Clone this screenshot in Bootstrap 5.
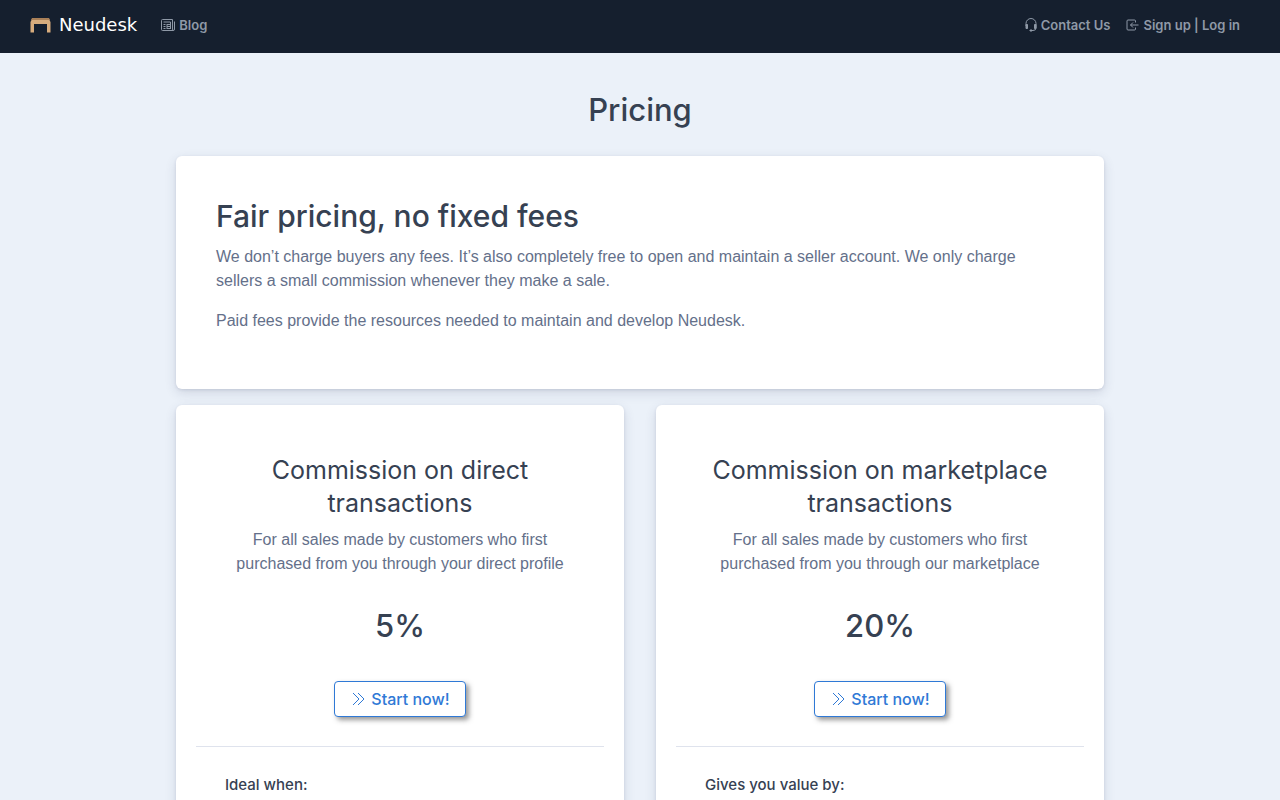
<!DOCTYPE html>
<html lang="en">
<head>
<meta charset="utf-8">
<meta name="viewport" content="width=device-width, initial-scale=1">
<title>Pricing - Neudesk</title>
<link href="https://cdn.jsdelivr.net/npm/bootstrap@5.3.0/dist/css/bootstrap.min.css" rel="stylesheet">
<style>
  body { background: #ebf1f9; color: #64708a; font: 400 16px/24px "Liberation Sans", Arial, sans-serif; }
  .site-nav { background: #151f2e; height: 53px; padding: 0 40px 4px 30px; font-family: "DejaVu Sans", sans-serif; }
  .site-nav .navbar-brand { color: #fff; font-size: 18px; line-height: 24px; gap: 8px; padding: 0; margin-right: 24px; }
  .site-nav .nav-link { color: #8f99a7; font-family: Inter, sans-serif; font-size: 13px; font-weight: 600; line-height: 24px; gap: 4px; padding: 0; }
  .nav-end { gap: 16px; }
  .page { max-width: 960px; padding: 36px 16px 40px; }
  h1, h2, h3, h4, .rate { font-family: Inter, sans-serif; color: #364152; }
  h1, .rate { font-size: 31px; line-height: 41px; font-weight: 500; }
  h1 { margin-bottom: 26px; }
  h2 { font-size: 30px; line-height: 41px; font-weight: 500; }
  h3 { font-size: 25px; line-height: 33px; font-weight: 400; margin-bottom: 8px; }
  h4 { font-size: 15px; line-height: 24px; font-weight: 500; }
  .panel { background: #fff; border-radius: 6px; box-shadow: 0 4px 12px rgba(50, 55, 95, .14), 0 1px 3px rgba(50, 55, 95, .12); }
  .intro { padding: 40px; }
  .plans { --bs-gutter-x: 32px; }
  .plan-top { padding: 49px 44px 29px; }
  .rate { margin: 29px 0 35px; }
  .btn-start { --bs-btn-color: #2f79d6; --bs-btn-border-color: #2f79d6; --bs-btn-bg: #fff; --bs-btn-hover-color: #fff; --bs-btn-hover-bg: #2f79d6;
    font-family: Inter, sans-serif; font-size: 16px; line-height: 24px; font-weight: 500; border-radius: 4px; padding: 5px 15px; gap: 5px; box-shadow: 3px 3px 5px rgba(50, 50, 50, .5); }
  .plan-list { margin: 0 20px; padding: 26px 29px 40px; border-top: 1px solid #dfe3ed; }
</style>
</head>
<body>
<nav class="site-nav navbar navbar-expand" aria-label="Main">
  <a class="navbar-brand d-flex align-items-center" href="#">
    <svg width="21" height="16" viewBox="0 0 21 16" aria-hidden="true"><path fill="#d7ac7d" d="M2 2h17l1.500 3v10.500h-3.500V7H4v8.500H.5V5z"/><path fill="#a98058" d="M2 1h17l1 2H1z"/></svg>
    <span>Neudesk</span>
  </a>
  <a class="nav-link d-flex align-items-center" href="#">
    <svg width="14" height="14" viewBox="0 0 14 14" fill="none" stroke="currentColor" aria-hidden="true"><path d="M11.500 1.500v9.500q0 1.500 1 1.500t1-1.500V3.500M11.500 1.500h-10q-1 0-1 1v9q0 1 1 1h11M2.500 4h7M2.500 6.500h2M2.500 8.500h2M2.500 10.500h2M6 6.500h3.500M6 8.500h3.500M6 10.500h3.500M6 6v5M9.500 4v7"/></svg>
    <span>Blog</span>
  </a>
  <div class="nav-end d-flex ms-auto">
    <a class="nav-link d-flex align-items-center" href="#">
      <svg width="12" height="14" viewBox="0 0 12 14" fill="none" stroke="currentColor" aria-hidden="true"><path d="M1 8V5.500a5 5 0 0 1 10 0V10q0 2.500-3 2.500H6"/><path fill="currentColor" d="M1 6.500h1.500v4H1zM9.500 6.500H11v4H9.500zM5 12h2v1H5z"/></svg>
      <span>Contact Us</span>
    </a>
    <a class="nav-link d-flex align-items-center" href="#">
      <svg width="13" height="12" viewBox="0 0 13 12" fill="none" stroke="currentColor" aria-hidden="true"><path d="M9.500 3.500V2q0-1-1-1H2Q1 1 1 2v8q0 1 1 1h6.500q1 0 1-1V8.500M12.500 6H4.500M7 3.500L4.500 6 7 8.500"/></svg>
      <span>Sign up | Log in</span>
    </a>
  </div>
</nav>
<main class="page container-fluid">
  <h1 class="text-center">Pricing</h1>
  <section class="panel intro mb-3">
    <h2 class="mb-2">Fair pricing, no fixed fees</h2>
    <p>We don’t charge buyers any fees. It’s also completely free to open and maintain a seller account. We only charge sellers a small commission whenever they make a sale.</p>
    <p>Paid fees provide the resources needed to maintain and develop Neudesk.</p>
  </section>
  <div class="plans row row-cols-1 row-cols-md-2 gy-3 gy-md-0">
    <div class="col">
      <section class="panel h-100">
        <div class="plan-top text-center">
          <h3>Commission on direct transactions</h3>
          <p class="mb-0">For all sales made by customers who first purchased from you through your direct profile</p>
          <div class="rate">5%</div>
          <button type="button" class="btn btn-start d-inline-flex align-items-center">
            <svg width="16" height="16" viewBox="0 0 16 16" fill="none" stroke="currentColor" aria-hidden="true"><path d="M3 2l6 6-6 6M8 2l6 6-6 6"/></svg>Start now!
          </button>
        </div>
        <div class="plan-list"><h4 class="mb-0">Ideal when:</h4></div>
      </section>
    </div>
    <div class="col">
      <section class="panel h-100">
        <div class="plan-top text-center">
          <h3>Commission on marketplace transactions</h3>
          <p class="mb-0">For all sales made by customers who first purchased from you through our marketplace</p>
          <div class="rate">20%</div>
          <button type="button" class="btn btn-start d-inline-flex align-items-center">
            <svg width="16" height="16" viewBox="0 0 16 16" fill="none" stroke="currentColor" aria-hidden="true"><path d="M3 2l6 6-6 6M8 2l6 6-6 6"/></svg>Start now!
          </button>
        </div>
        <div class="plan-list"><h4 class="mb-0">Gives you value by:</h4></div>
      </section>
    </div>
  </div>
</main>
<script src="https://cdn.jsdelivr.net/npm/bootstrap@5.3.0/dist/js/bootstrap.bundle.min.js"></script>
</body>
</html>
